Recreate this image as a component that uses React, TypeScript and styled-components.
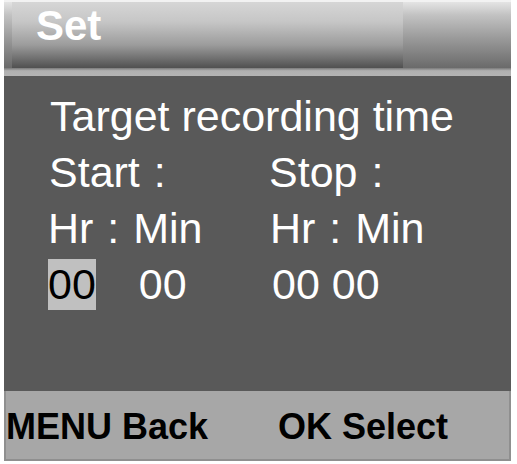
import React from "react";
import styled, { createGlobalStyle } from "styled-components";

const GlobalStyle = createGlobalStyle`
  html, body {
    margin: 0;
    padding: 0;
    background: #ffffff;
  }
  body {
    font-family: "Liberation Sans", Arial, sans-serif;
  }
`;

const Screen = styled.div`
  width: 507px;
  margin-left: 4px;
  display: flex;
  flex-direction: column;
`;

const Header = styled.div`
  height: 68px;
  display: flex;
  background: linear-gradient(to bottom, #e4e4e4 0%, #c2c2c2 20%, #9a9a9a 55%, #6a6a6a 100%);
  border-top: 2px solid #f2f2f2;
  box-sizing: border-box;
`;

const TitleBox = styled.div`
  width: 391px;
  margin-left: 8px;
  height: 66px;
  box-sizing: border-box;
  padding-left: 24px;
  background: linear-gradient(to bottom, #d6d6d6 0%, #c6c6c6 30%, #9c9c9c 65%, #505050 100%);
  color: #ffffff;
  font-weight: bold;
  font-size: 42px;
  line-height: 48px;
`;

const HeaderStrip = styled.div`
  height: 8px;
  background: linear-gradient(to bottom, #7a7a7a 0%, #b0b0b0 35%, #b4b4b4 100%);
`;

const Body = styled.div`
  height: 315px;
  box-sizing: border-box;
  background: #595959;
  padding: 12px 0 0 43px;
  display: grid;
  grid-template-columns: 222px auto;
  grid-auto-rows: 56px;
  align-content: start;
  color: #ffffff;
  font-size: 43px;
  line-height: 56px;
  white-space: pre;
`;

const Wide = styled.div`
  grid-column: 1 / span 2;
  padding-left: 3px;
`;

const Cell = styled.div<{ $shift?: number; $spread?: boolean }>`
  padding-left: ${(p) => p.$shift ?? 0}px;
  word-spacing: ${(p) => (p.$spread ? "2px" : "0")};
`;

const Selected = styled.span`
  background: #c0c0c0;
  color: #000000;
  padding: 1px 0 2px;
`;

const Gap = styled.span`
  display: inline-block;
  width: 43px;
`;

const Footer = styled.div`
  height: 70px;
  box-sizing: border-box;
  background: #a7a7a7;
  border: 2px solid #8f8f8f;
  border-top: none;
  display: flex;
  align-items: center;
  color: #000000;
  font-weight: bold;
  font-size: 36px;
  white-space: pre;
`;

const FooterItem = styled.div<{ $width: number }>`
  width: ${(p) => p.$width}px;
  padding-top: 4px;
`;

export default function App() {
  return (
    <>
      <GlobalStyle />
      <Screen>
        <Header>
          <TitleBox>Set</TitleBox>
        </Header>
        <HeaderStrip />
        <Body>
          <Wide>Target recording time</Wide>
          <Cell $shift={2} $spread>Start :</Cell>
          <Cell $shift={0} $spread>Stop :</Cell>
          <Cell $shift={1} $spread>Hr : Min</Cell>
          <Cell $shift={1} $spread>Hr : Min</Cell>
          <Cell $shift={1}>
            <Selected>00</Selected>
            <Gap />
            00
          </Cell>
          <Cell $shift={3}>00 00</Cell>
        </Body>
        <Footer>
          <FooterItem $width={272}>MENU Back</FooterItem>
          <FooterItem $width={200}>OK Select</FooterItem>
        </Footer>
      </Screen>
    </>
  );
}
